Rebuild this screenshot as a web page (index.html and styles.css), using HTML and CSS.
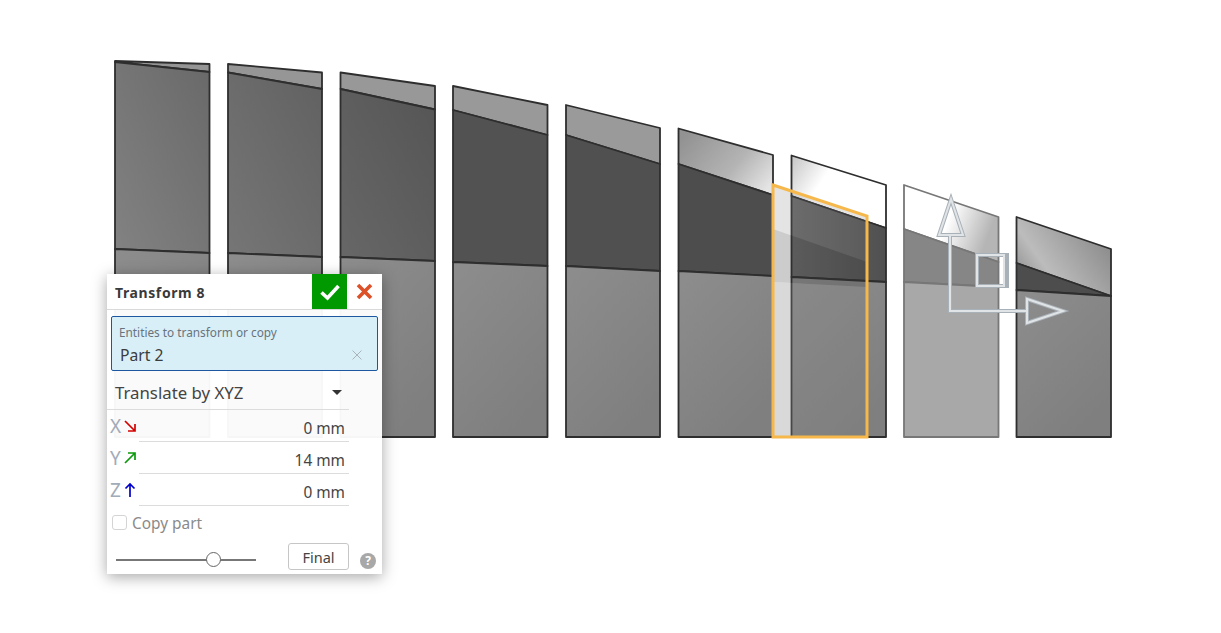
FILE: index.html

```html
<!DOCTYPE html>
<html lang="en">
<head>
  <meta charset="UTF-8">
  <title>Transform 8</title>
  <link rel="stylesheet" href="styles.css">
</head>
<body>
  <svg class="scene" width="1221" height="633" viewBox="0 0 1221 633">
    <defs>
      <linearGradient id="mid1" x1="0" y1="1" x2="1" y2="0"><stop offset="0" stop-color="#828282"/><stop offset="1" stop-color="#696969"/></linearGradient>
      <linearGradient id="mid2" x1="0" y1="1" x2="1" y2="0"><stop offset="0" stop-color="#767676"/><stop offset="1" stop-color="#616161"/></linearGradient>
      <linearGradient id="mid3" x1="0" y1="1" x2="1" y2="0"><stop offset="0" stop-color="#676767"/><stop offset="1" stop-color="#555"/></linearGradient>
      <linearGradient id="low" x1="0" y1="0" x2="0.6" y2="1"><stop offset="0" stop-color="#8d8d8d"/><stop offset="1" stop-color="#7f7f7f"/></linearGradient>
      <linearGradient id="top6" x1="0" y1="0.2" x2="1" y2="0.8"><stop offset="0" stop-color="#929292"/><stop offset="0.6" stop-color="#b4b4b4"/><stop offset="1" stop-color="#e4e4e4"/></linearGradient>
      <linearGradient id="top7" x1="0" y1="0" x2="1" y2="0.5"><stop offset="0" stop-color="#c4c4c4"/><stop offset="0.4" stop-color="#fff"/><stop offset="1" stop-color="#fff"/></linearGradient>
      <linearGradient id="top8" x1="0" y1="0" x2="1" y2="0.3"><stop offset="0" stop-color="#fff"/><stop offset="0.55" stop-color="#fff"/><stop offset="1" stop-color="#b5b5b5"/></linearGradient>
      <linearGradient id="top9" x1="0" y1="0.8" x2="1" y2="0.2"><stop offset="0" stop-color="#8c8c8c"/><stop offset="0.3" stop-color="#bcbcbc"/><stop offset="1" stop-color="#868686"/></linearGradient>
      <linearGradient id="mid7" x1="0" y1="0" x2="1" y2="0"><stop offset="0" stop-color="#696969"/><stop offset="1" stop-color="#505050"/></linearGradient>
    </defs>

    <g class="blade">
      <polygon fill="#959595" points="115,61 209.500,64 209.500,72 115,62"/>
      <polygon fill="url(#mid1)" points="115,62 209.500,72 209.500,253 115,249"/>
      <polygon fill="url(#low)" points="115,249 209.500,253 209.500,437 115,437"/>
    </g>
    <g class="blade">
      <polygon fill="#969696" points="228,64 322,72.500 322,89 228,72.500"/>
      <polygon fill="url(#mid2)" points="228,72.500 322,89 322,257 228,253"/>
      <polygon fill="url(#low)" points="228,253 322,257 322,437 228,437"/>
    </g>
    <g class="blade">
      <polygon fill="#989898" points="340.500,72.500 435,86 435,109.500 340.500,89"/>
      <polygon fill="url(#mid3)" points="340.500,89 435,109.500 435,261 340.500,257"/>
      <polygon fill="url(#low)" points="340.500,257 435,261 435,437 340.500,437"/>
    </g>
    <g class="blade">
      <polygon fill="#999" points="453,86 547.500,105 547.500,135 453,110"/>
      <polygon fill="#525252" points="453,110 547.500,135 547.500,266 453,262"/>
      <polygon fill="url(#low)" points="453,262 547.500,266 547.500,437 453,437"/>
    </g>
    <g class="blade">
      <polygon fill="#9a9a9a" points="566,105 660,128 660,164 566,135"/>
      <polygon fill="#505050" points="566,135 660,164 660,271 566,266"/>
      <polygon fill="url(#low)" points="566,266 660,271 660,437 566,437"/>
    </g>
    <g class="blade">
      <polygon fill="url(#top6)" points="678.500,128.500 773,155 773,195 678.500,164"/>
      <polygon fill="#4d4d4d" points="678.500,164 773,195 773,276 678.500,271"/>
      <polygon fill="url(#low)" points="678.500,271 773,276 773,437 678.500,437"/>
    </g>
    <g class="blade">
      <polygon fill="url(#top7)" points="791.500,155.500 886,185 886,228 791.500,196"/>
      <polygon fill="url(#mid7)" points="791.500,196 886,228 886,282 791.500,277"/>
      <polygon fill="url(#low)" points="791.500,277 886,282 886,437 791.500,437"/>
    </g>
    <g class="blade blade-faded">
      <polygon fill="url(#top8)" points="904,185 998.500,217 998.500,262 904,229"/>
      <polygon fill="#868686" points="904,229 998.500,262 998.500,287 904,282"/>
      <polygon fill="#a8a8a8" points="904,282 998.500,287 998.500,437 904,437"/>
    </g>
    <g class="blade">
      <polygon fill="url(#top9)" points="1016.500,217 1111,249 1111,296 1016.500,263"/>
      <polygon fill="#4d4d4d" points="1016.500,263 1111,296 1016.500,290"/>
      <polygon fill="url(#low)" points="1016.500,290 1111,296 1111,437 1016.500,437"/>
    </g>

    <!-- ghost of the part being moved -->
    <polygon class="ghost-top" points="773,185 867,216 867,262 773,229"/>
    <polygon class="ghost-mid" points="773,229 867,262 867,287 773,282"/>
    <polygon class="ghost-low" points="773,282 867,287 867,437 773,437"/>
    <polygon class="ghost-edge" points="773,185 867,216 867,437 773,437"/>

    <!-- manipulator -->
    <g class="manip">
      <path d="M950 236V311H1027"/>
      <polygon points="951,199 939,235 963,235"/>
      <polygon points="1027,299 1027,323 1063,311"/>
      <rect x="977" y="255" width="30" height="31"/>
    </g>
    <g class="manip-inner">
      <path d="M950 236V311H1027"/>
      <polygon points="951,199 939,235 963,235"/>
      <polygon points="1027,299 1027,323 1063,311"/>
      <rect x="977" y="255" width="27" height="31"/>
    </g>
  </svg>

  <section class="panel">
    <header class="panel-head">
      <h1 class="panel-title">Transform 8</h1>
      <button class="btn-ok" aria-label="Accept">
        <svg width="22" height="18" viewBox="0 0 22 18"><path d="M2.500 9.500 8.500 15 19.500 3" class="ok-mark"/></svg>
      </button>
      <button class="btn-cancel" aria-label="Cancel">
        <svg width="17" height="17" viewBox="0 0 17 17"><path d="M2 2 15 15M15 2 2 15" class="cancel-mark"/></svg>
      </button>
    </header>

    <div class="entity-field">
      <div class="entity-label">Entities to transform or copy</div>
      <div class="entity-value">
        <span>Part 2</span>
        <svg width="10" height="10" viewBox="0 0 10 10"><path d="M.5.500 9.500 9.500M9.500.500.5 9.500" class="clear-mark"/></svg>
      </div>
    </div>

    <div class="select-row">
      <span>Translate by XYZ</span>
      <span class="caret"></span>
    </div>

    <div class="axis-row">
      <span class="axis-name">X</span>
      <svg class="axis-arrow" width="14" height="14" viewBox="0 0 14 14"><path d="M2 2 12 12M12 5V12H5" class="arrow-x"/></svg>
      <span class="axis-value">0 mm</span>
    </div>
    <div class="axis-row">
      <span class="axis-name">Y</span>
      <svg class="axis-arrow" width="14" height="14" viewBox="0 0 14 14"><path d="M2 12 12 2M5 2H12V9" class="arrow-y"/></svg>
      <span class="axis-value">14 mm</span>
    </div>
    <div class="axis-row">
      <span class="axis-name">Z</span>
      <svg class="axis-arrow" width="14" height="16" viewBox="0 0 14 16"><path d="M7 15V2M2.500 6.500 7 2 11.500 6.500" class="arrow-z"/></svg>
      <span class="axis-value">0 mm</span>
    </div>

    <label class="copy-row">
      <span class="checkbox"></span>
      <span class="copy-text">Copy part</span>
    </label>

    <div class="footer-row">
      <div class="slider"><span class="slider-knob"></span></div>
      <button class="btn-final">Final</button>
      <span class="help">?</span>
    </div>
  </section>
</body>
</html>
```

FILE: styles.css

```css
body {
  margin: 0;
  background: #fff;
  font-family: "Noto Sans", sans-serif;
  color: #333;
  overflow: hidden;
}
.scene {
  display: block;
  filter: blur(0.4px);
}
.blade polygon {
  stroke: #2e2e2e;
  stroke-width: 1.8;
  stroke-linejoin: round;
}
.blade-faded polygon {
  stroke: #777;
}
.ghost-top {
  fill: rgba(120, 120, 120, 0.2);
}
.ghost-mid {
  fill: rgba(50, 50, 50, 0.25);
}
.ghost-low {
  fill: rgba(130, 130, 130, 0.3);
}
.ghost-edge {
  fill: none;
  stroke: #f7b84b;
  stroke-width: 3;
}
.manip path,
.manip polygon,
.manip rect {
  fill: none;
  stroke: #a9b1b8;
  stroke-width: 4;
}
.manip-inner path,
.manip-inner polygon,
.manip-inner rect {
  fill: none;
  stroke: #e0e4e7;
  stroke-width: 2;
}

.panel {
  position: absolute;
  left: 107px;
  top: 274px;
  width: 275px;
  height: 300px;
  background: rgba(255, 255, 255, 0.96);
  box-shadow: 0 3px 14px rgba(0, 0, 0, 0.35);
}
.panel-head {
  display: flex;
  align-items: center;
  height: 35px;
  background: #fff;
  border-bottom: 1px solid #d9d9d9;
}
.panel-title {
  flex: 1;
  margin: 0;
  padding: 2px 0 0 8px;
  font-size: 14px;
  font-weight: 700;
  letter-spacing: 0.6px;
  color: #3a3a3a;
}
.btn-ok,
.btn-cancel {
  display: flex;
  align-items: center;
  justify-content: center;
  width: 35px;
  height: 35px;
  padding: 0;
  border: 0;
  background: #fff;
}
.btn-ok {
  background: #009900;
}
.ok-mark {
  fill: none;
  stroke: #fff;
  stroke-width: 3.6;
}
.cancel-mark {
  fill: none;
  stroke: #dc5128;
  stroke-width: 3.6;
}
.entity-field {
  box-sizing: border-box;
  height: 55px;
  margin: 6px 4px 0;
  padding: 7px 7px 0;
  background: #d9eff8;
  border: 1px solid #1c57a0;
  border-radius: 2px;
}
.entity-label {
  font-size: 11.800px;
  line-height: 16px;
  color: #68737d;
}
.entity-value {
  display: flex;
  align-items: center;
  justify-content: space-between;
  margin-top: 4px;
  padding: 0 8px 0 1px;
  font-size: 15.700px;
  line-height: 22px;
  color: #3c3c3c;
}
.clear-mark {
  fill: none;
  stroke: #a9b4ba;
  stroke-width: 1;
}
.select-row {
  box-sizing: border-box;
  display: flex;
  align-items: center;
  justify-content: space-between;
  width: 242px;
  height: 39px;
  padding: 5px 7px 0 8px;
  border-bottom: 1px solid #dcdcdc;
  font-size: 16.800px;
  color: #444;
}
.caret {
  border-left: 5px solid transparent;
  border-right: 5px solid transparent;
  border-top: 5px solid #333;
}
.axis-row {
  box-sizing: border-box;
  display: flex;
  align-items: center;
  width: 242px;
  height: 32px;
  padding-left: 3px;
}
.axis-name {
  width: 14px;
  font-size: 19px;
  line-height: 26px;
  color: #a2abb8;
}
.axis-arrow {
  display: block;
  margin-left: -1px;
}
.axis-value {
  flex: 1;
  box-sizing: border-box;
  height: 32px;
  margin-left: 2px;
  padding-right: 4px;
  border-bottom: 1px solid #dcdcdc;
  font-size: 15.400px;
  line-height: 38px;
  text-align: right;
  color: #444;
}
.arrow-x,
.arrow-y,
.arrow-z {
  fill: none;
  stroke-width: 1.700;
}
.arrow-x {
  stroke: #d40000;
}
.arrow-y {
  stroke: #0b9a0b;
}
.arrow-z {
  stroke: #0000cc;
}
.copy-row {
  display: flex;
  align-items: center;
  gap: 5px;
  height: 20px;
  margin-top: 6px;
  padding-left: 5px;
  font-size: 15.400px;
  color: #8a8a8a;
}
.copy-text {
  padding-top: 2px;
}
.checkbox {
  box-sizing: border-box;
  width: 15px;
  height: 15px;
  border: 1px solid #d4d4d4;
  border-radius: 3px;
  background: #fff;
}
.footer-row {
  display: flex;
  align-items: center;
  height: 27px;
  margin-top: 11px;
  padding-left: 9px;
}
.slider {
  position: relative;
  width: 140px;
  height: 2px;
  margin-top: 6px;
  background: #777;
}
.slider-knob {
  position: absolute;
  left: 90px;
  top: -7px;
  box-sizing: border-box;
  width: 15px;
  height: 15px;
  border: 1px solid #666;
  border-radius: 50%;
  background: #fff;
}
.btn-final {
  box-sizing: border-box;
  width: 61px;
  height: 27px;
  margin-left: 32px;
  padding: 0;
  border: 1px solid #c6c6c6;
  border-radius: 3px;
  background: #fff;
  font-family: inherit;
  font-size: 14.500px;
  color: #444;
}
.help {
  width: 16px;
  height: 16px;
  margin: 8px 0 0 11px;
  border-radius: 50%;
  background: #a8a8a8;
  font-size: 12px;
  font-weight: 700;
  line-height: 16px;
  text-align: center;
  color: #fff;
}
```
